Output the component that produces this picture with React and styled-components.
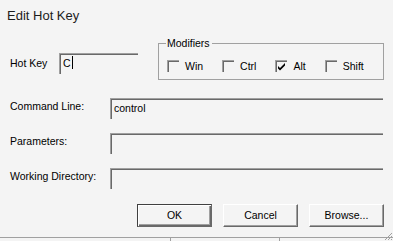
import React from 'react';
import styled, { createGlobalStyle } from 'styled-components';

const GlobalStyle = createGlobalStyle`
  html, body {
    margin: 0;
    padding: 0;
    background: #f4f4f4;
  }
`;

const Dialog = styled.div`
  width: 393px;
  height: 241px;
  background: #f4f4f4;
  font-family: "Liberation Sans", Arial, sans-serif;
  font-size: 10.5px;
  color: #000;
  display: flex;
  flex-direction: column;
  overflow: hidden;
  position: relative;
`;

const Title = styled.div`
  height: 20px;
  padding: 8px 0 0 7px;
  font-size: 13px;
  line-height: 15px;
  color: #1c1c1c;
`;

const TopRow = styled.div`
  display: flex;
  align-items: flex-start;
  margin-top: 16px;
  padding-left: 10px;
  height: 37px;
`;

const HotKeyLabel = styled.label`
  width: 49px;
  margin-top: 10px;
  height: 21px;
  line-height: 20px;
`;

const Edit = styled.div`
  box-sizing: border-box;
  width: ${p => p.$w}px;
  height: 21px;
  border-top: 1px solid #a0a0a0;
  border-left: 1px solid #a0a0a0;
  box-shadow: inset 1px 1px 0 #696969;
  padding: 1px 0 0 3px;
  line-height: 16px;
  white-space: nowrap;
  margin-top: ${p => p.$mt || 0}px;
`;

const Caret = styled.span`
  display: inline-block;
  width: 1px;
  height: 13px;
  background: #000;
  vertical-align: -2px;
  margin-left: 1px;
`;

const GroupBox = styled.div`
  box-sizing: border-box;
  position: relative;
  width: 226px;
  height: 37px;
  margin-left: 20px;
  border: 1px solid #a0a0a0;
  padding: 16px 0 0 8px;
  display: flex;
  gap: 19px;
`;

const Legend = styled.span`
  position: absolute;
  left: 7px;
  top: -7px;
  padding: 0 2px 0 1px;
  background: #f4f4f4;
  line-height: 12px;
`;

const Check = styled.div`
  display: flex;
  align-items: center;
  height: 12px;
  gap: 6px;
  line-height: 12px;
`;

const Box = styled.span`
  box-sizing: border-box;
  width: 12px;
  height: 12px;
  border-top: 1px solid #a0a0a0;
  border-left: 1px solid #a0a0a0;
  box-shadow: inset 1px 1px 0 #696969;
  position: relative;
  display: block;
`;

const Form = styled.div`
  display: grid;
  grid-template-columns: 100px 273px;
  row-gap: 14px;
  padding-left: 10px;
  margin-top: 18px;
`;

const FieldLabel = styled.label`
  height: 21px;
  line-height: 17px;
`;

const Buttons = styled.div`
  display: flex;
  justify-content: flex-end;
  gap: 11px;
  padding-right: 9px;
  margin-top: 15px;
`;

const Button = styled.div`
  box-sizing: border-box;
  width: 75px;
  height: 23px;
  display: flex;
  align-items: center;
  justify-content: center;
  border: 1px solid ${p => (p.$default ? '#404040' : 'transparent')};
  border-top-color: ${p => (p.$default ? '#404040' : '#ffffff')};
  border-left-color: ${p => (p.$default ? '#404040' : '#ffffff')};
  border-right-color: #696969;
  border-bottom-color: #696969;
  box-shadow: ${p =>
    p.$default
      ? 'inset 1px 1px 0 #fff, inset -1px -1px 0 #696969, inset -2px -2px 0 #a0a0a0'
      : 'inset -1px -1px 0 #a0a0a0'};
  padding-bottom: 1px;
`;

const StatusBar = styled.div`
  margin-top: 10px;
  height: 3px;
  border-top: 1px solid #a0a0a0;
  display: flex;
`;

const Pane = styled.div`
  width: ${p => p.$w}px;
  border-right: 1px solid #a0a0a0;
`;

const Grip = styled.svg`
  position: absolute;
  right: 0;
  bottom: 0;
`;

const CheckMark = () => (
  <svg width="10" height="10" viewBox="0 0 10 10" style={{ position: 'absolute', left: 1, top: 1 }}>
    <path d="M1 4 L3 6 L8 1 L8 3.5 L3 8.5 L1 6.5 Z" fill="#000" />
  </svg>
);

const modifiers = [
  { name: 'Win', on: false },
  { name: 'Ctrl', on: false },
  { name: 'Alt', on: true },
  { name: 'Shift', on: false },
];

const App = () => {
  return (
    <Dialog>
      <GlobalStyle />
      <Title>Edit Hot Key</Title>
      <TopRow>
        <HotKeyLabel>Hot Key</HotKeyLabel>
        <Edit $w={79} $mt={10}>
          C<Caret />
        </Edit>
        <GroupBox>
          <Legend>Modifiers</Legend>
          {modifiers.map(m => (
            <Check key={m.name}>
              <Box>{m.on && <CheckMark />}</Box>
              {m.name}
            </Check>
          ))}
        </GroupBox>
      </TopRow>
      <Form>
        <FieldLabel>Command Line:</FieldLabel>
        <Edit $w={273}>control</Edit>
        <FieldLabel>Parameters:</FieldLabel>
        <Edit $w={273} />
        <FieldLabel>Working Directory:</FieldLabel>
        <Edit $w={273} />
      </Form>
      <Buttons>
        <Button $default>OK</Button>
        <Button>Cancel</Button>
        <Button>Browse...</Button>
      </Buttons>
      <StatusBar>
        <Pane $w={170} />
        <Pane $w={108} />
      </StatusBar>
      <Grip width="10" height="10" viewBox="0 0 10 10">
        <path d="M9 2 L2 9 M9 5 L5 9 M9 8 L8 9" stroke="#a0a0a0" strokeWidth="1" />
      </Grip>
    </Dialog>
  );
};

export default App;
